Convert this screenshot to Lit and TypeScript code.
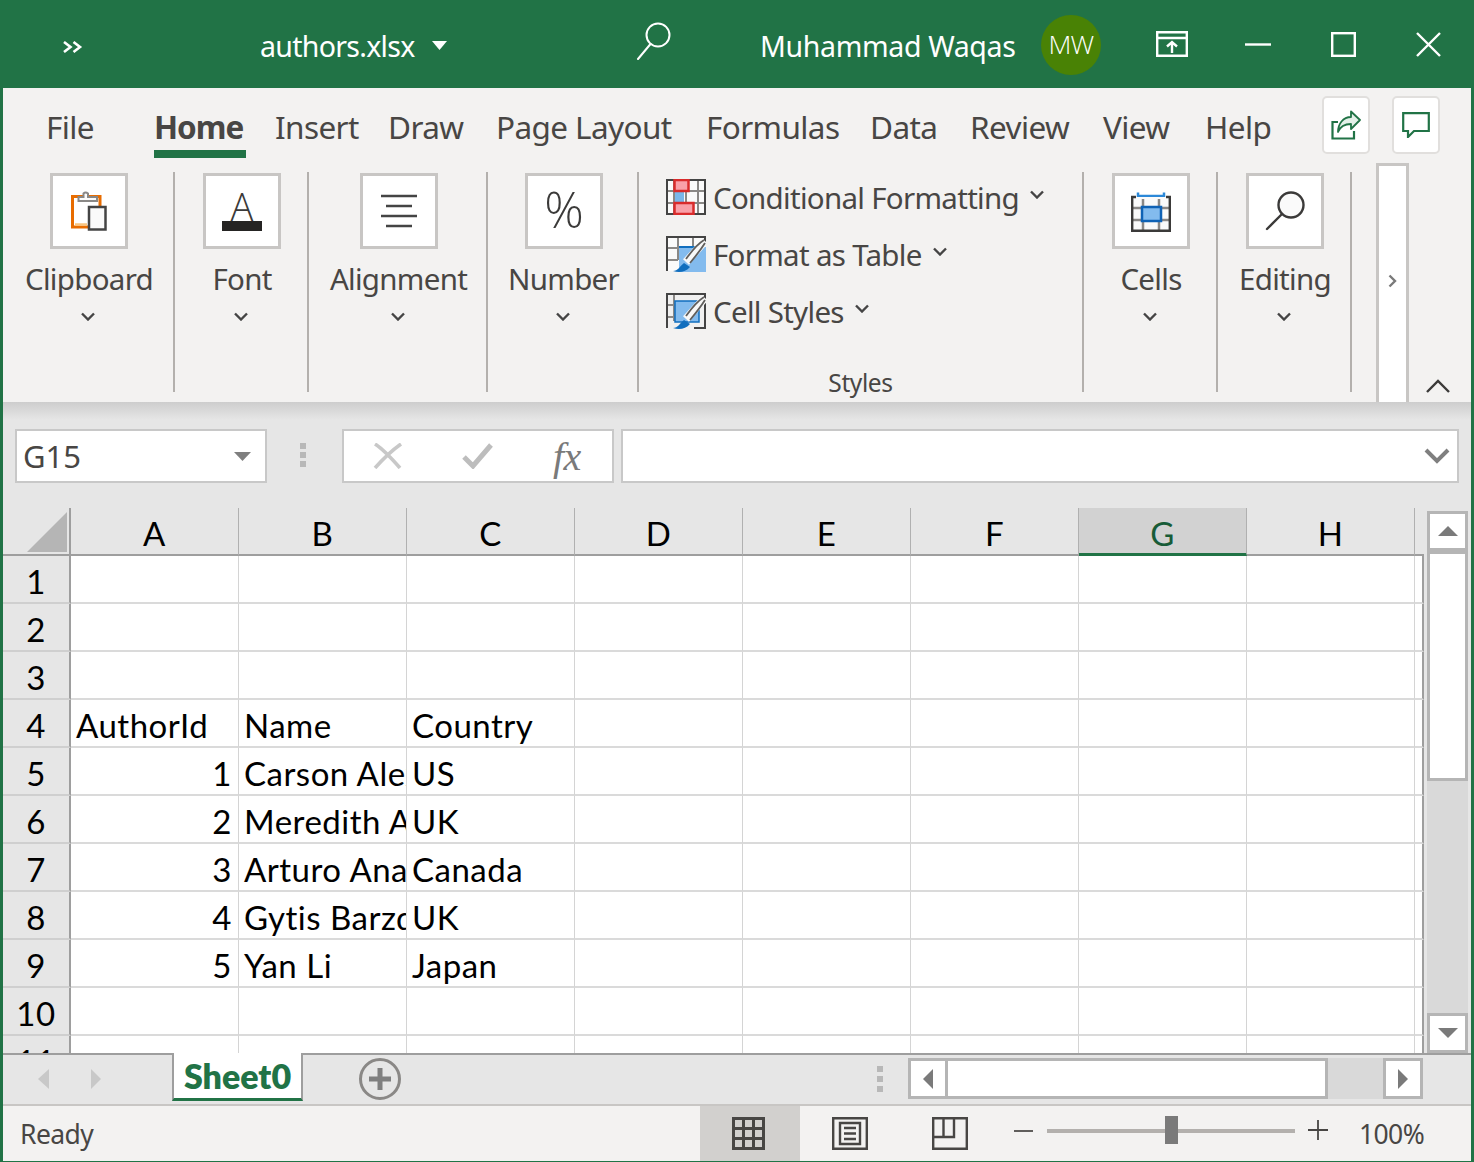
import { LitElement, html, svg, css } from "lit";
import { customElement } from "lit/decorators.js";

const chevron = html`<svg class="chev" width="14" height="9" viewBox="0 0 14 9"><path d="M1 1.500 7 7.500 13 1.500" fill="none" stroke="#444" stroke-width="2.400"/></svg>`;

const clipboardIcon = html`<svg width="36" height="40" viewBox="0 0 36 40">
  <path d="M1.500 5.500H29V36H1.500Z" fill="#fff" stroke="#e86c00" stroke-width="3" />
  <path d="M4 33.500H16" stroke="#f9c57f" stroke-width="2.500" />
  <path d="M7.500 10V6H12.500V2.500Q14.500 .5 17 2.500V6H26V10Z" fill="#fbfbfb" stroke="#8a8886" stroke-width="2" />
  <rect x="18" y="16" width="16.500" height="22.500" fill="#fafafa" stroke="#444" stroke-width="2.500" />
</svg>`;
const fontIcon = html`<div class="font-ico"><span class="a-glyph">A</span><i class="a-bar"></i></div>`;
const alignIcon = html`<svg width="36" height="34" viewBox="0 0 36 34">
  <path d="M0 2H36M5 12H31M0 22H36M5 32H31" stroke="#444" stroke-width="2.500"/>
</svg>`;
const percentIcon = html`<span class="percent">%</span>`;
const cellsIcon = html`<svg width="40" height="41" viewBox="0 0 40 41">
  <path d="M7 1.500V8M33 1.500V8M7 5H33" fill="none" stroke="#2b88d8" stroke-width="2.500"/>
  <rect x="1" y="6" width="38" height="34" fill="#fafafa"/>
  <path d="M12 8V39M28 8V39M2 17H38M2 29H38" stroke="#8a8886" stroke-width="2.500"/>
  <path d="M5 6H1.200V39.800H38.800V6H35" fill="none" stroke="#3b3a39" stroke-width="2.400"/>
  <rect x="11" y="16" width="19" height="14" fill="#83bbee" stroke="#0f62b5" stroke-width="2.500"/>
</svg>`;
const lensIcon = html`<svg width="40" height="40" viewBox="0 0 40 40">
  <circle cx="26" cy="14" r="12.500" fill="#fafafa" stroke="#3b3a39" stroke-width="2.400"/>
  <path d="M17 23 2 38" stroke="#3b3a39" stroke-width="2.400" stroke-linecap="round"/>
</svg>`;
const gridBase = svg`
  <rect x="1" y="1" width="38" height="34" fill="#fafafa"/>
  <path d="M8 1V35M20 1V35M32 1V35M1 12H39M1 24H39" stroke="#8a8886" stroke-width="2"/>
  <path d="M1 1H39V35H1Z" fill="none" stroke="#444" stroke-width="2"/>`;
const condIcon = html`<svg class="style-ico" width="40" height="36" viewBox="0 0 40 36">
  ${gridBase}
  <rect x="9" y="12" width="9" height="12" fill="#7ab7ea"/>
  <rect x="8.500" y="1" width="14" height="11" fill="#f9a0a8" stroke="#d92b2b" stroke-width="2.500"/>
  <rect x="8.500" y="24" width="19" height="11" fill="#f9a0a8" stroke="#d92b2b" stroke-width="2.500"/>
</svg>`;
const brush = svg`
  <path d="M39 5 20 26" stroke="#f8f8f8" stroke-width="8"/>
  <path d="M38 4Q30 9 20 23M39 7Q34 15 24 27" fill="none" stroke="#605e5c" stroke-width="1.800"/>
  <path d="M7 35C12 35 14 30 18 27L24 31C20 36 13 37 7 35Z" fill="#106ebe"/>`;
const tableIcon = html`<svg class="style-ico" width="40" height="36" viewBox="0 0 40 36">
  <rect x="1" y="1" width="38" height="34" fill="#fafafa"/>
  <path d="M1 12H39M1 24H12M12 1V24M27 1V12" stroke="#8a8886" stroke-width="2"/>
  <path d="M1 35V1H39V10" fill="none" stroke="#444" stroke-width="2"/>
  <rect x="13" y="11" width="27" height="25" fill="#83bbee"/>
  <path d="M13 11H34" stroke="#106ebe" stroke-width="2"/>
  ${brush}
</svg>`;
const cellStyleIcon = html`<svg class="style-ico" width="40" height="36" viewBox="0 0 40 36">
  <rect x="1" y="1" width="38" height="34" fill="#f0f0f0"/>
  <path d="M1 12H8M8 1V28M1 24H8" stroke="#8a8886" stroke-width="2"/>
  <rect x="9" y="8" width="24" height="21" fill="#83bbee" stroke="#106ebe" stroke-width="1.500"/>
  <path d="M1 35V1H39V35H28" fill="none" stroke="#444" stroke-width="2"/>
  ${brush}
</svg>`;

const tabs = ["File", "Home", "Insert", "Draw", "Page Layout", "Formulas", "Data", "Review", "View", "Help"];
const columns = ["A", "B", "C", "D", "E", "F", "G", "H"];
type Cell = { t: string; right?: boolean };
const data: Record<number, Cell[]> = {
  4: [{ t: "AuthorId" }, { t: "Name" }, { t: "Country" }],
  5: [{ t: "1", right: true }, { t: "Carson Alexander" }, { t: "US" }],
  6: [{ t: "2", right: true }, { t: "Meredith Alonso" }, { t: "UK" }],
  7: [{ t: "3", right: true }, { t: "Arturo Anand" }, { t: "Canada" }],
  8: [{ t: "4", right: true }, { t: "Gytis Barzdukas" }, { t: "UK" }],
  9: [{ t: "5", right: true }, { t: "Yan Li" }, { t: "Japan" }],
};
const rows = Array.from({ length: 11 }, (_, i) => i + 1);

@customElement("app-root")
export class AppRoot extends LitElement {
  static styles = css`
    :host { display: block; width: 1474px; height: 1162px; overflow: hidden; font-family: "Noto Sans", sans-serif; }
    * { box-sizing: border-box; }
    svg { display: block; flex: none; }
    .window { width: 1474px; height: 1162px; background: #217346; display: flex; flex-direction: column; }

    .title { height: 88px; flex: none; display: flex; align-items: center; color: #fff; font-size: 28.500px; letter-spacing: -.35px; }
    .more { margin: 5px 0 0 62px; width: 198px; }
    .fname { width: 172px; white-space: nowrap; letter-spacing: -.7px; margin-top: 3px; }
    .caret { margin-top: 2px; }
    .search { margin-left: 189px; margin-top: -6px; }
    .uname { margin: 3px 0 0 88px; width: 281px; white-space: nowrap; }
    .avatar { width: 60px; height: 60px; border-radius: 50%; background: #498205; display: flex; align-items: center; justify-content: center; font: 300 26.500px "Open Sans", sans-serif; letter-spacing: -.8px; margin-top: 2px; padding-bottom: 2px; }
    .restore { margin-left: 55px; }
    .min { margin-left: 57px; }
    .max { margin-left: 60px; }
    .close { margin-left: 60px; }

    .body { flex: 1; margin: 0 3px 3px; display: flex; flex-direction: column; background: #e6e6e6; min-height: 0; }

    .ribbon { height: 314px; flex: none; background: #f3f2f1; display: flex; flex-direction: column; color: #484644; }
    .tabrow { height: 70px; flex: none; display: flex; padding-left: 43px; }
    .tabgrid { display: grid; grid-template-columns: 108px 121px 113px 108px 210px 164px 100px 133px 102px 116px; margin-right: 1px; }
    .tab { font-size: 31.500px; letter-spacing: -.6px; height: 70px; padding-top: 17px; line-height: 44px; white-space: nowrap; }
    .tab.on { font-weight: 700; letter-spacing: -1px; }
    .tab.on span { display: inline-block; height: 53px; width: 92px; border-bottom: 8px solid #217346; }
    .rbtn { width: 48px; height: 58px; margin-top: 8px; background: #fff; border: 2px solid #e1dfdd; border-radius: 5px; display: flex; align-items: center; justify-content: center; }
    .rbtn + .rbtn { margin-left: 22px; }

    .groups { flex: 1; display: flex; min-height: 0; }
    .group { height: 234px; padding: 15px 0 0 2px; display: flex; flex-direction: column; align-items: center; flex: none; }
    .g1 { width: 170px; } .g2 { width: 132px; } .g3 { width: 177px; } .g4 { width: 149px; } .g5 { width: 443px; }
    .sep { width: 2px; height: 220px; margin-top: 14px; background: #b3b0ad; flex: none; }
    .bigbtn { width: 78px; height: 76px; background: #fff; border: 3px solid #c8c6c4; display: flex; align-items: center; justify-content: center; flex: none; }
    .glabel { font-size: 29.500px; letter-spacing: -.7px; line-height: 32px; height: 32px; margin-top: 14px; white-space: nowrap; }
    .group > .chev { margin: 17px 2px 0 0; }
    .font-ico { width: 40px; height: 40px; display: flex; flex-direction: column; align-items: center; }
    .a-glyph { font-size: 38px; font-weight: 300; line-height: 30px; height: 30px; color: #3b3a39; font-family: "Open Sans", sans-serif; }
    .a-bar { display: block; width: 40px; height: 10px; background: #252423; }
    .percent { font-size: 49px; font-weight: 300; line-height: 46px; color: #3b3a39; font-family: "Open Sans", sans-serif; letter-spacing: -1px; margin-top: -5px; }

    .group.styles { padding: 21px 0 0 27px; align-items: flex-start; }
    .srow { height: 36px; display: flex; align-items: center; font-size: 29.500px; letter-spacing: -.7px; white-space: nowrap; margin-bottom: 21px; }
    .style-ico { margin-right: 7px; }
    .srow .chev { margin-left: 11px; margin-top: -6px; }
    .styles-label { align-self: center; font-size: 24.500px; letter-spacing: -.4px; line-height: 30px; margin: 18px 0 0 -27px; }
    .spacer { width: 24px; flex: none; }
    .scroller { width: 33px; margin-top: 5px; background: #fff; border: 3px solid #c8c6c4; border-bottom: none; display: flex; padding-top: 108px; justify-content: center; flex: none; }
    .collapse { margin-left: 17px; margin-top: 221px; }

    .fbar { height: 106px; flex: none; padding: 27px 12px 0; display: flex; background: linear-gradient(#cdcdcd, #e6e6e6 18px); }
    .fld { height: 54px; background: #fff; border: 2px solid #c8c8c8; display: flex; align-items: center; }
    .namebox { width: 252px; padding: 0 14px 0 6px; justify-content: space-between; font-size: 31px; color: #484644; letter-spacing: 0; }
    .dots { width: 75px; display: flex; flex-direction: column; gap: 3px; padding: 14px 0 0 33px; }
    .dots i { display: block; width: 6px; height: 6px; background: #b8b8b8; }
    .fxbox { width: 272px; }
    .fx-x { margin-left: 29px; }
    .fx-ok { margin-left: 59px; }
    .fx { margin-left: 60px; font: italic 40px "Liberation Serif", serif; color: #7a7a7a; letter-spacing: -.5px; }
    .finput { width: 838px; margin-left: 7px; justify-content: flex-end; padding-right: 7px; }

    .gridwrap { height: 545px; flex: none; display: flex; }
    .sheet { width: 1421px; height: 545px; overflow: hidden; display: grid; grid-template-columns: 68px repeat(8, 168px) 9px; grid-auto-rows: 48px; font-family: Lato, sans-serif; font-size: 33px; letter-spacing: .5px; color: #000; background: #fff; align-content: start; }
    .corner { background: #e6e6e6; border-bottom: 2px solid #9e9e9e; border-right: 2px solid #9e9e9e; padding: 4px 0 0 24px; }
    .ch { background: #e6e6e6; border-bottom: 2px solid #9e9e9e; border-right: 1px solid #b0b0b0; display: flex; align-items: center; justify-content: center; padding-top: 4px; }
    .ch.sel { background: #d2d2d2; color: #185c38; border-bottom: 3px solid #217346; }
    .ch.end { border-right: 0; }
    .rh { background: #e6e6e6; border-bottom: 2px solid #cfcfcf; border-right: 2px solid #9e9e9e; display: flex; align-items: center; justify-content: center; padding-top: 4px; }
    .c { border-bottom: 2px solid #dadada; border-right: 1px solid #d4d4d4; padding: 3px 6px 0 5px; display: flex; align-items: center; white-space: nowrap; overflow: hidden; }
    .c.r { justify-content: flex-end; }
    .c.end { border-right: 2px solid #9e9e9e; padding: 0; }
    .vscroll { width: 41px; margin: 3px 0 0 3px; flex: none; display: flex; flex-direction: column; background: #d9d9d9; }
    .sbtn { background: #fff; border: 3px solid #b5b5b5; display: flex; align-items: center; justify-content: center; flex: none; }
    .vscroll .sbtn { height: 40px; width: 41px; }
    .vthumb { height: 230px; width: 41px; background: #fff; border: 3px solid #b5b5b5; flex: none; }
    .vtrack { flex: 1; }

    .tabs { height: 51px; flex: none; background: #e6e6e6; border-top: 2px solid #9e9e9e; display: flex; align-items: flex-start; }
    .nav1 { margin: 14px 0 0 35px; }
    .nav2 { margin: 14px 0 0 42px; }
    .sheet-tab { margin: -2px 0 0 71px; width: 131px; height: 48px; background: #fff; border-left: 2px solid #9e9e9e; border-right: 2px solid #9e9e9e; border-bottom: 3px solid #217346; color: #217346; font: 800 34px/45px Lato, sans-serif; text-align: center; }
    .add { margin: 3px 0 0 56px; width: 42px; height: 42px; border: 3px solid #8a8886; border-radius: 50%; display: flex; align-items: center; justify-content: center; }
    .dots2 { margin: 11px 0 0 476px; display: flex; flex-direction: column; gap: 4px; width: 6px; }
    .dots2 i { display: block; width: 6px; height: 6px; background: #b8b8b8; }
    .hscroll { margin: 3px 0 0 25px; width: 515px; height: 41px; display: flex; background: #d9d9d9; }
    .hscroll .sbtn { width: 40px; height: 41px; }
    .hthumb { width: 380px; background: #fff; border: 3px solid #b5b5b5; border-left: 0; }
    .htrack { flex: 1; }

    .status { flex: 1; background: #f3f2f1; border-top: 2px solid #c8c6c4; display: flex; align-items: stretch; color: #484644; font-size: 26.500px; letter-spacing: -.6px; }
    .ready { width: 697px; padding: 8px 0 0 17px; line-height: 40px; }
    .view { width: 100px; display: flex; align-items: center; justify-content: center; }
    .view.on { background: #d2d0ce; padding-right: 3px; }
    .zminus { margin: 24px 0 0 14px; width: 19px; height: 2px; background: #605e5c; }
    .slider { margin: -2px 0 0 14px; width: 248px; height: 54px; position: relative; display: flex; align-items: center; }
    .slider::before { content: ""; display: block; width: 100%; height: 4px; background: #b3b0ad; }
    .thumb { position: absolute; left: 118px; top: 12px; width: 13px; height: 28px; background: #7a7a7a; }
    .zplus { margin: 14px 0 0 13px; }
    .pct { margin-left: 31px; line-height: 54px; padding-top: 1px; white-space: nowrap; }
  `;

  private corner() {
    return html`<svg width="40" height="40" viewBox="0 0 40 40"><path d="M0 40 40 0V40Z" fill="#b5b5b5"/></svg>`;
  }

  private titlebar() {
    return html`<div class="title">
      <svg class="more" width="198" height="12" viewBox="0 0 198 12"><path d="M1 1 7.500 6 1 11M10.500 1 17 6 10.500 11" fill="none" stroke="#fff" stroke-width="2.600" transform="translate(1 0)"/></svg>
      <span class="fname">authors.xlsx</span>
      <svg class="caret" width="15" height="9" viewBox="0 0 15 9"><path d="M0 0H15L7.500 9Z" fill="#fff"/></svg>
      <svg class="search" width="36" height="38" viewBox="0 0 36 38"><circle cx="22" cy="13" r="11.500" fill="none" stroke="#fff" stroke-width="2"/><path d="M14.500 22 2 37" stroke="#fff" stroke-width="2" stroke-linecap="round"/></svg>
      <span class="uname">Muhammad Waqas</span>
      <div class="avatar">MW</div>
      <svg class="restore" width="32" height="26" viewBox="0 0 32 26"><path d="M1.200 1.200H30.800V24.800H1.200ZM1.200 7H30.800M16 22V11M11 15.500 16 11 21 15.500" fill="none" stroke="#fff" stroke-width="2.400"/></svg>
      <svg class="min" width="26" height="3" viewBox="0 0 26 3"><path d="M0 1.500H26" stroke="#fff" stroke-width="2.400"/></svg>
      <svg class="max" width="25" height="25" viewBox="0 0 25 25"><rect x="1.200" y="1.200" width="22.600" height="22.600" fill="none" stroke="#fff" stroke-width="2.400"/></svg>
      <svg class="close" width="25" height="25" viewBox="0 0 25 25"><path d="M1 1 24 24M24 1 1 24" stroke="#fff" stroke-width="2.400"/></svg>
    </div>`;
  }

  private tabrow() {
    return html`<div class="tabrow">
      <div class="tabgrid">
        ${tabs.map((t) => (t === "Home" ? html`<div class="tab on"><span>${t}</span></div>` : html`<div class="tab">${t}</div>`))}
      </div>
      <div class="rbtn">
        <svg width="30" height="30" viewBox="0 0 30 30"><path d="M20 1.500 29 10 20 19V14C13 14 9 17 7 22 7 14 12 7 20 7Z" fill="#e3f0e8" stroke="#217346" stroke-width="1.800" stroke-linejoin="round"/><path d="M7 12H1.500V28.500H23V21" fill="none" stroke="#217346" stroke-width="2.200"/></svg>
      </div>
      <div class="rbtn">
        <svg width="28" height="26" viewBox="0 0 28 26"><path d="M1.200 1.200H26.800V19H12L6 25V19H1.200Z" fill="#fff" stroke="#217346" stroke-width="2.200"/></svg>
      </div>
    </div>`;
  }

  private big(cls: string, icon: unknown, label: string) {
    return html`<div class="group ${cls}"><div class="bigbtn">${icon}</div><div class="glabel">${label}</div>${chevron}</div>`;
  }

  private groups() {
    return html`<div class="groups">
      ${this.big("g1", clipboardIcon, "Clipboard")}<div class="sep"></div>
      ${this.big("g2", fontIcon, "Font")}<div class="sep"></div>
      ${this.big("g3", alignIcon, "Alignment")}<div class="sep"></div>
      ${this.big("g4", percentIcon, "Number")}<div class="sep"></div>
      <div class="group g5 styles">
        <div class="srow">${condIcon}Conditional Formatting${chevron}</div>
        <div class="srow">${tableIcon}Format as Table${chevron}</div>
        <div class="srow">${cellStyleIcon}Cell Styles${chevron}</div>
        <div class="styles-label">Styles</div>
      </div><div class="sep"></div>
      ${this.big("g2", cellsIcon, "Cells")}<div class="sep"></div>
      ${this.big("g2", lensIcon, "Editing")}<div class="sep"></div>
      <div class="spacer"></div>
      <div class="scroller"><svg width="9" height="14" viewBox="0 0 9 14"><path d="M1.500 1.500 7 7 1.500 12.500" fill="none" stroke="#7a7a7a" stroke-width="2.400"/></svg></div>
      <svg class="collapse" width="24" height="14" viewBox="0 0 24 14"><path d="M1 13 12 2 23 13" fill="none" stroke="#3b3a39" stroke-width="2.400"/></svg>
    </div>`;
  }

  private fbar() {
    return html`<div class="fbar">
      <div class="fld namebox"><span>G15</span><svg width="17" height="9" viewBox="0 0 17 9"><path d="M0 0H17L8.500 9Z" fill="#7f7f7f"/></svg></div>
      <div class="dots"><i></i><i></i><i></i></div>
      <div class="fld fxbox">
        <svg class="fx-x" width="30" height="26" viewBox="0 0 30 26"><path d="M2 1C10 6 20 17 27 25M28 1C18 8 10 16 2 25" fill="none" stroke="#c8c8c8" stroke-width="3.600"/></svg>
        <svg class="fx-ok" width="31" height="26" viewBox="0 0 31 26"><path d="M2 14 11 23 29 2" fill="none" stroke="#bdbdbd" stroke-width="5"/></svg>
        <span class="fx">fx</span>
      </div>
      <div class="fld finput"><svg width="26" height="16" viewBox="0 0 26 16"><path d="M2 2 13 13 24 2" fill="none" stroke="#7f7f7f" stroke-width="4"/></svg></div>
    </div>`;
  }

  private sheet() {
    return html`<div class="sheet">
      <div class="corner">${this.corner()}</div>
      ${columns.map((c) => html`<div class="ch ${c === "G" ? "sel" : ""}">${c}</div>`)}
      <div class="ch end"></div>
      ${rows.map(
        (r) => html`<div class="rh">${r}</div>
          ${columns.map((_, i) => {
            const cell = data[r]?.[i];
            return html`<div class="c ${cell?.right ? "r" : ""}">${cell?.t ?? ""}</div>`;
          })}
          <div class="c end"></div>`
      )}
    </div>`;
  }

  private arrow(dir: string, color: string, w: number, h: number) {
    const d = dir === "l" ? `M${w} 0V${h}L0 ${h / 2}Z` : dir === "r" ? `M0 0V${h}L${w} ${h / 2}Z` : dir === "u" ? `M0 ${h}H${w}L${w / 2} 0Z` : `M0 0H${w}L${w / 2} ${h}Z`;
    return html`<svg width="${w}" height="${h}" viewBox="0 0 ${w} ${h}"><path d="${d}" fill="${color}"/></svg>`;
  }

  private bottom() {
    return html`<div class="tabs">
      <div class="nav1">${this.arrow("l", "#c8c8c8", 11, 20)}</div>
      <div class="nav2">${this.arrow("r", "#c8c8c8", 10, 20)}</div>
      <div class="sheet-tab">Sheet0</div>
      <div class="add"><svg width="22" height="22" viewBox="0 0 22 22"><path d="M11 0V22M0 11H22" stroke="#7f7f7f" stroke-width="5"/></svg></div>
      <div class="dots2"><i></i><i></i><i></i></div>
      <div class="hscroll">
        <div class="sbtn">${this.arrow("l", "#7a7a7a", 10, 20)}</div>
        <div class="hthumb"></div>
        <div class="htrack"></div>
        <div class="sbtn">${this.arrow("r", "#7a7a7a", 10, 20)}</div>
      </div>
    </div>`;
  }

  private status() {
    return html`<div class="status">
      <div class="ready">Ready</div>
      <div class="view on"><svg width="33" height="33" viewBox="0 0 33 33"><path d="M1.500 1.500H31.500V31.500H1.500ZM11.500 1.500V31.500M21.500 1.500V31.500M1.500 11.500H31.500M1.500 21.500H31.500" fill="none" stroke="#484644" stroke-width="3"/></svg></div>
      <div class="view"><svg width="36" height="33" viewBox="0 0 36 33"><path d="M1.200 1.200H34.800V31.800H1.200ZM8 6H28V27H8ZM12 11H24M12 16.500H24M12 22H24" fill="none" stroke="#484644" stroke-width="2.400"/></svg></div>
      <div class="view"><svg width="36" height="33" viewBox="0 0 36 33"><path d="M1.200 1.200H34.800V31.800H1.200ZM1.200 20H22V1.200M11.500 1.200V20" fill="none" stroke="#484644" stroke-width="2.400"/></svg></div>
      <div class="zminus"></div>
      <div class="slider"><div class="thumb"></div></div>
      <svg class="zplus" width="20" height="20" viewBox="0 0 20 20"><path d="M10 0V20M0 10H20" stroke="#484644" stroke-width="1.800"/></svg>
      <div class="pct">100%</div>
    </div>`;
  }

  render() {
    return html`<div class="window">
      ${this.titlebar()}
      <div class="body">
        <div class="ribbon">${this.tabrow()}${this.groups()}</div>
        ${this.fbar()}
        <div class="gridwrap">
          ${this.sheet()}
          <div class="vscroll">
            <div class="sbtn">${this.arrow("u", "#7a7a7a", 20, 10)}</div>
            <div class="vthumb"></div>
            <div class="vtrack"></div>
            <div class="sbtn">${this.arrow("d", "#7a7a7a", 20, 10)}</div>
          </div>
        </div>
        ${this.bottom()}
        ${this.status()}
      </div>
    </div>`;
  }
}
